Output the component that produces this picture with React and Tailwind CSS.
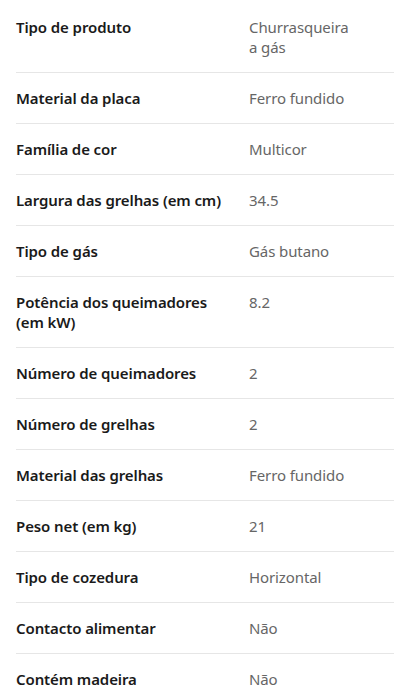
import React from 'react';

const specs = [
  ['Tipo de produto', 'Churrasqueira a gás'],
  ['Material da placa', 'Ferro fundido'],
  ['Família de cor', 'Multicor'],
  ['Largura das grelhas (em cm)', '34.5'],
  ['Tipo de gás', 'Gás butano'],
  ['Potência dos queimadores (em kW)', '8.2'],
  ['Número de queimadores', '2'],
  ['Número de grelhas', '2'],
  ['Material das grelhas', 'Ferro fundido'],
  ['Peso net (em kg)', '21'],
  ['Tipo de cozedura', 'Horizontal'],
  ['Contacto alimentar', 'Não'],
  ['Contém madeira', 'Não'],
];

export default function App() {
  return (
    <div className="bg-white px-4 pt-[2px] font-['Noto_Sans',sans-serif] text-[15px] leading-5 tracking-[-0.1px]">
      {specs.map(([label, value], i) => (
        <div key={label} className={`flex py-[15px] ${i < specs.length - 1 ? 'border-b border-[#e6e6e6]' : ''}`}>
          <div className="w-[233px] shrink-0 pr-4 font-semibold text-[#1a1a1a]">{label}</div>
          <div className="w-[104px] text-[#666666]">{value}</div>
        </div>
      ))}
    </div>
  );
}
